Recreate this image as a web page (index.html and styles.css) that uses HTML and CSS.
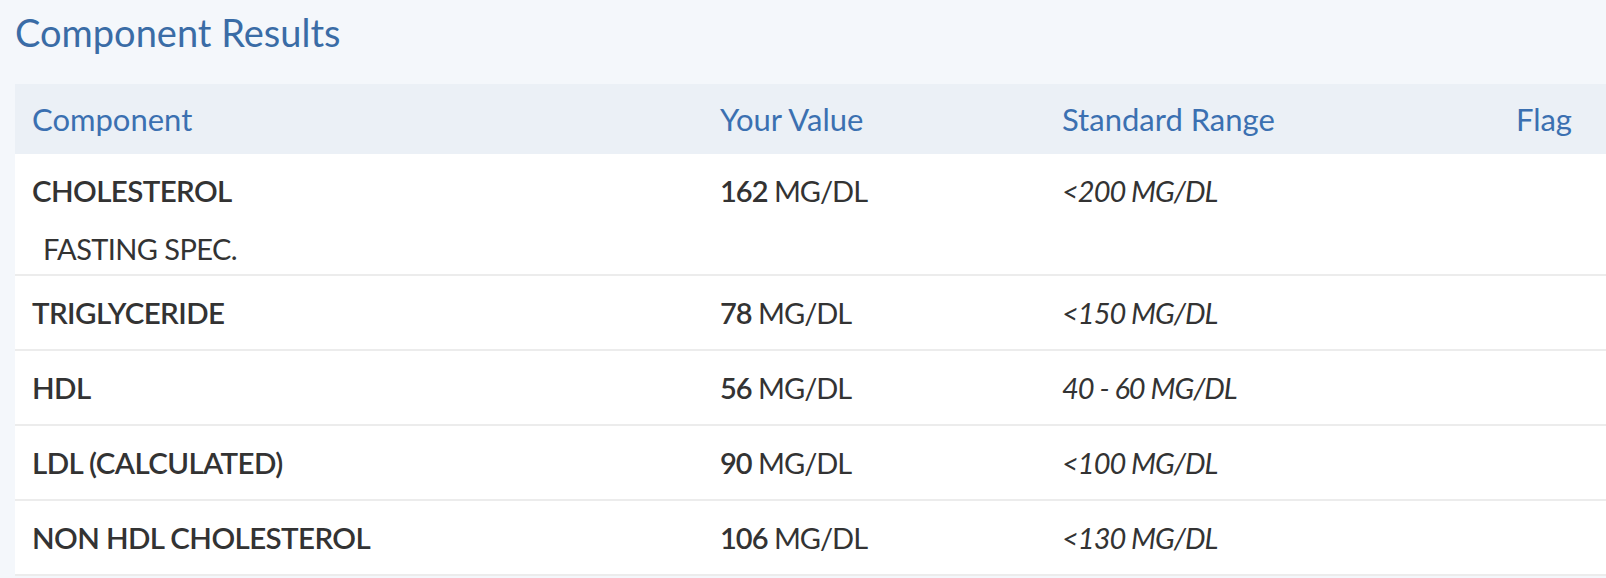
FILE: index.html
```html
<!DOCTYPE html>
<html lang="en">
<head>
  <meta charset="UTF-8" />
  <meta name="viewport" content="width=device-width, initial-scale=1.0"/>
  <title>Component Results</title>
  <link rel="stylesheet" href="styles.css">
</head>
<body>
  <section class="results">
    <h2 class="results-title">Component Results</h2>

    <table class="results-table">
      <colgroup>
        <col class="col-name">
        <col class="col-value">
        <col class="col-range">
        <col class="col-flag">
      </colgroup>
      <thead>
        <tr>
          <th>Component</th>
          <th>Your Value</th>
          <th>Standard Range</th>
          <th class="flag-head">Flag</th>
        </tr>
      </thead>
      <tbody>
        <tr class="no-border">
          <td class="name">CHOLESTEROL</td>
          <td class="value"><b>162</b> MG/DL</td>
          <td class="range">&lt;200 MG/DL</td>
          <td class="flag"></td>
        </tr>
        <tr class="comment">
          <td colspan="4">FASTING SPEC.</td>
        </tr>
        <tr>
          <td class="name">TRIGLYCERIDE</td>
          <td class="value"><b>78</b> MG/DL</td>
          <td class="range">&lt;150 MG/DL</td>
          <td class="flag"></td>
        </tr>
        <tr>
          <td class="name">HDL</td>
          <td class="value"><b>56</b> MG/DL</td>
          <td class="range">40 - 60 MG/DL</td>
          <td class="flag"></td>
        </tr>
        <tr>
          <td class="name">LDL (CALCULATED)</td>
          <td class="value"><b>90</b> MG/DL</td>
          <td class="range">&lt;100 MG/DL</td>
          <td class="flag"></td>
        </tr>
        <tr>
          <td class="name">NON HDL CHOLESTEROL</td>
          <td class="value"><b>106</b> MG/DL</td>
          <td class="range">&lt;130 MG/DL</td>
          <td class="flag"></td>
        </tr>
      </tbody>
    </table>
  </section>
</body>
</html>
```

FILE: styles.css
```css
body {
    margin: 0;
    padding: 0;
    background: #f4f7fb;
    font-family: 'Lato', 'Open Sans', sans-serif;
    color: #333;
    overflow: hidden;
}

.results {
    padding: 0 0 0 15px;
}

/* Title */
.results-title {
    margin: 0;
    padding: 6px 0 26px 0;
    font-size: 38px;
    line-height: 52px;
    font-weight: 400;
    color: #3a6ca6;
}

/* Table */
.results-table {
    width: 1591px;
    table-layout: fixed;
    border-collapse: collapse;
    background: #fff;
    font-size: 29px;
}

.col-name { width: 688px; }
.col-value { width: 342px; }
.col-range { width: 400px; }
.col-flag { width: 161px; }

.results-table th {
    background: #ebf0f6;
    color: #3b70b1;
    font-size: 31px;
    font-weight: 400;
    text-align: left;
    height: 70px;
    padding: 0 17px;
}

.results-table th.flag-head {
    text-align: right;
    padding-right: 34px;
}

.results-table td {
    padding: 22px 17px;
    line-height: 29px;
    letter-spacing: -1px;
    border-bottom: 2px solid #ececec;
    white-space: nowrap;
}

.results-table td.name {
    font-size: 29.5px;
    font-weight: 600;
    letter-spacing: -0.6px;
}

.value b {
    font-weight: 600;
}

.range {
    font-style: italic;
    letter-spacing: -1.2px;
}

.no-border td {
    border-bottom: none;
}

.results-table .comment td {
    padding: 7px 17px 11px 28px;
    letter-spacing: -0.6px;
}
```
